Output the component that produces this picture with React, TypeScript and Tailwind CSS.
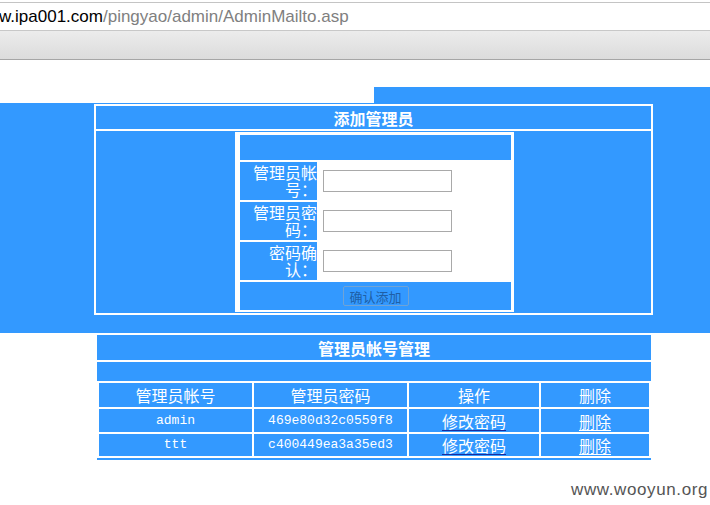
const BLUE = "bg-[#3399ff]";

function LabelCell({ text }: { text: string }) {
  return (
    <div className="w-[77px] shrink-0 bg-[#3399ff] flex items-center justify-end text-right text-white text-[16px] leading-[17px] pl-[2px]">
      <span className="w-full">{text}</span>
    </div>
  );
}

function FormRow({ label }: { label: string }) {
  return (
    <div className="flex h-[38px] gap-[3px]">
      <LabelCell text={label} />
      <div className="flex-1 flex items-center pl-[3px]">
        <input className="w-[129px] h-[22px] border border-[#a9a9a9] bg-white outline-none" />
      </div>
    </div>
  );
}

export default function App() {
  const rows = [
    { name: "admin", pwd: "469e80d32c0559f8", h: "h-[23px]" },
    { name: "ttt", pwd: "c400449ea3a35ed3", h: "h-[22px]" },
  ];

  return (
    <div
      className="relative w-[710px] h-[505px] overflow-hidden bg-white"
      style={{ fontFamily: '"Noto Sans CJK SC", "Liberation Sans", sans-serif' }}
    >
      {/* browser address bar */}
      <div className="h-[2px] bg-white" />
      <div className="h-[28px] border-t border-[#c4c4c4] flex items-center bg-white">
        <span
          className="text-[17px] leading-none -ml-[1px]"
          style={{ fontFamily: '"Liberation Sans", Arial, sans-serif' }}
        >
          <span className="text-black">w.ipa001.com</span>
          <span className="text-[#808080]">/pingyao/admin/AdminMailto.asp</span>
        </span>
      </div>
      <div className="h-[30px] border-t border-[#c8c8c8] border-b border-b-[#a6a6a6] bg-gradient-to-b from-[#ececec] to-[#dcdcdc]" />
      <div className="h-[27px]" />

      {/* blue tab */}
      <div className="flex justify-end">
        <div className={`w-[336px] h-[16px] ${BLUE}`} />
      </div>

      {/* add admin area */}
      <div className={`h-[230px] ${BLUE} pt-[1px]`}>
        <div className="ml-[94px] w-[559px] border-2 border-white">
          <div className="h-[25px] flex items-center justify-center text-white font-bold text-[16px] border-b-2 border-white">
            添加管理员
          </div>
          <div className="flex justify-center py-[1px] pl-[2px]">
            <div className="w-[279px] h-[180px] bg-white border-2 border-white pt-[1px] pl-[3px] pr-[1px] flex flex-col gap-[2px]">
              <div className={`h-[25px] ${BLUE}`} />
              <FormRow label="管理员帐号：" />
              <FormRow label="管理员密码：" />
              <FormRow label="密码确认：" />
              <div className={`h-[28px] ${BLUE} flex items-center justify-center`}>
                <button className="w-[66px] h-[20px] border border-[#6fa3d6] rounded-[2px] bg-[#3399ff] text-[13px] leading-none text-[#1f5fa6]">
                  确认添加
                </button>
              </div>
            </div>
          </div>
        </div>
      </div>

      {/* account management */}
      <div className="ml-[97px] w-[554px] pt-[2px] flex flex-col gap-[2px]">
        <div className={`h-[25px] ${BLUE} flex items-center justify-center text-white font-bold text-[16px]`}>
          管理员帐号管理
        </div>
        <div className={`h-[19px] ${BLUE}`} />
        <div className="flex gap-[2px] px-[2px] h-[24px] text-white text-[16px]">
          <div className={`w-[153px] ${BLUE} flex items-center justify-center`}>管理员帐号</div>
          <div className={`w-[153px] ${BLUE} flex items-center justify-center`}>管理员密码</div>
          <div className={`w-[130px] ${BLUE} flex items-center justify-center`}>操作</div>
          <div className={`w-[108px] ${BLUE} flex items-center justify-center`}>删除</div>
        </div>
        {rows.map((r) => (
          <div key={r.name} className={`flex gap-[2px] px-[2px] ${r.h} text-white`}>
            <div
              className={`w-[153px] ${BLUE} flex items-center justify-center text-[13px]`}
              style={{ fontFamily: '"Liberation Mono", monospace' }}
            >
              {r.name}
            </div>
            <div
              className={`w-[153px] ${BLUE} flex items-center justify-center text-[13px]`}
              style={{ fontFamily: '"Liberation Mono", monospace' }}
            >
              {r.pwd}
            </div>
            <div className={`w-[130px] ${BLUE} flex items-center justify-center text-[16px]`}>
              <a href="#" className="underline decoration-[#1a2c9c] underline-offset-2">修改密码</a>
            </div>
            <div className={`w-[108px] ${BLUE} flex items-center justify-center text-[16px]`}>
              <a href="#" className="underline underline-offset-2">删除</a>
            </div>
          </div>
        ))}
        <div className={`h-[2px] ${BLUE}`} />
      </div>

      {/* watermark */}
      <div
        className="absolute right-[2px] bottom-[3px] text-[17px] tracking-[0.6px] text-[#555]"
        style={{ fontFamily: '"Liberation Sans", Arial, sans-serif' }}
      >
        www.wooyun.org
      </div>
    </div>
  );
}
